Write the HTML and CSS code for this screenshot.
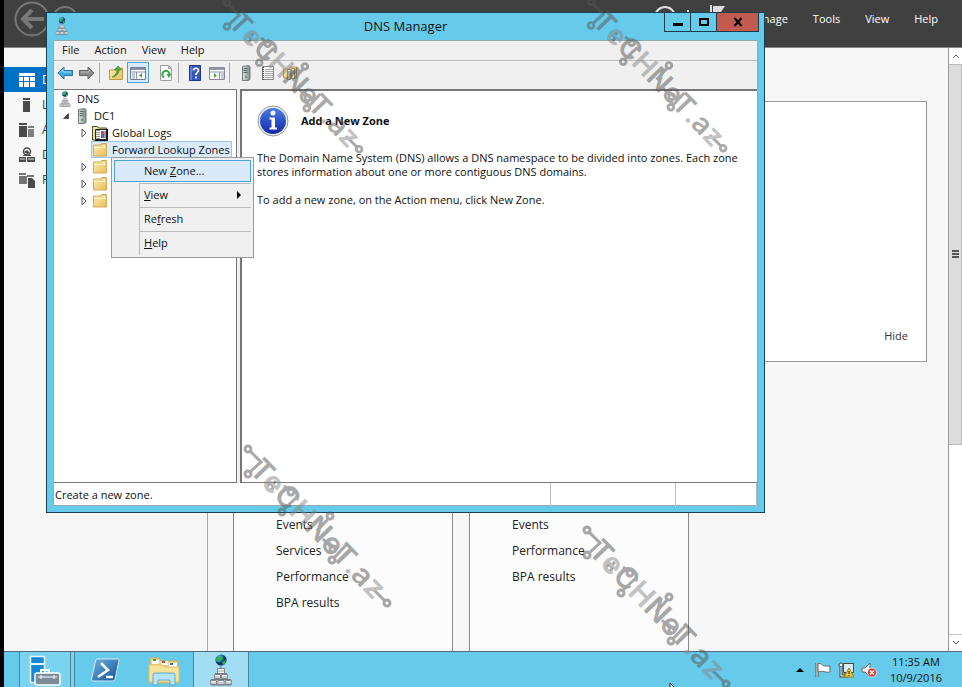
FILE: index.html
```html
<!DOCTYPE html>
<html lang="en">
<head>
<meta charset="utf-8">
<title>DNS Manager</title>
<link rel="stylesheet" href="styles.css">
</head>
<body>
<svg class="sprite" aria-hidden="true">
  <defs>
    <linearGradient id="gold" x1="0" y1="0" x2="1" y2="1"><stop offset="0" stop-color="#fdeeb0"/><stop offset="1" stop-color="#e8bd5c"/></linearGradient>
    <linearGradient id="steel" x1="0" y1="0" x2="1" y2="0"><stop offset="0" stop-color="#e2e6e6"/><stop offset="1" stop-color="#7f8788"/></linearGradient>
    <linearGradient id="blue" x1="0" y1="0" x2="0" y2="1"><stop offset="0" stop-color="#4a7be8"/><stop offset="1" stop-color="#1329a8"/></linearGradient>
    <linearGradient id="ps" x1="0" y1="0" x2="1" y2="1"><stop offset="0" stop-color="#6fb2e2"/><stop offset="1" stop-color="#12508f"/></linearGradient>
    <radialGradient id="globe" cx=".35" cy=".3"><stop offset="0" stop-color="#8ed9ef"/><stop offset=".6" stop-color="#1973ae"/><stop offset="1" stop-color="#0b3467"/></radialGradient>
  </defs>
  <symbol id="dns" viewBox="0 0 24 32">
    <circle cx="12" cy="6" r="5.6" fill="url(#globe)"/>
    <path d="M8 3l5-1 1 3-4 3-3-1zM13 8l4-2-1 4-2 1z" fill="#36ad55"/>
    <path d="M12 11v4" stroke="#777"/>
    <g fill="#f5f5f5" stroke="#85858b"><path d="M8.500 14.500h7v5h-7zM5.500 20.500h6v4h-6zM12.500 20.500h6v4h-6zM1.500 26.500h6v4h-6zM9 26.500h6v4H9zM16.500 26.500h6v4h-6z"/></g>
    <path d="M6 19.500h12M2 25.500h20M2 31h20" stroke="#77777d" fill="none"/>
    <path d="M9 17h6M6 23h5M13 23h5M2 29h5M10 29h4M17 29h5" stroke="#aaa" fill="none"/>
  </symbol>
  <symbol id="folder" viewBox="0 0 16 16">
    <path d="M1.500 3h7l1-1.500h5V14h-13z" fill="url(#gold)" stroke="#d3ab58"/>
    <path d="M10 2.500h3.500V5H10z" fill="#fff5cf" stroke="#d9b566" stroke-width=".6"/>
    <path d="M2 5.500h12" stroke="#fff4c4"/>
  </symbol>
  <symbol id="server" viewBox="0 0 12 16">
    <path d="M2.500 1.500l6-1 1.500 1v13l-2 1h-5.500z" fill="url(#steel)" stroke="#747b7c"/>
    <path d="M3.500 3.500h4M3.500 5.500h4M3.500 7.500h4" stroke="#566"/><path d="M5 11h2v2H5z" fill="#59a866"/>
  </symbol>
  <symbol id="logs" viewBox="0 0 16 16">
    <path d="M.5 3.500V1.500h5l1 1.500h8v12H.5z" fill="#f2e57e" stroke="#444"/>
    <path d="M3.500 4.500h11v10h-11z" fill="#fff" stroke="#222"/><path d="M5 5v9M7 5v9" stroke="#222" stroke-dasharray="1 1"/>
    <path d="M9 6h3v7H9z" fill="#5961b4"/><path d="M10 7h2v2h-2z" fill="#e64c4c"/><path d="M13 6v7" stroke="#333"/><path d="M15.500 4v11.500H3" stroke="#111" fill="none"/>
  </symbol>
  <symbol id="back" viewBox="0 0 16 16"><path d="M1 8l6-6v3.500h8.500v5H7V14z" fill="#42a9df" stroke="#2673a8"/><path d="M3 7.500l3-3V7h8" stroke="#a3e0fa" fill="none"/></symbol>
  <symbol id="forward" viewBox="0 0 16 16"><path d="M15 8L9 2v3.500H.5v5H9V14z" fill="#8c8c8c" stroke="#656565"/><path d="M2 7h8V5" stroke="#bbb" fill="none"/></symbol>
  <symbol id="up" viewBox="0 0 16 16"><path d="M1.500 5h7l1-2h5v11.500h-13z" fill="url(#gold)" stroke="#bf9a4b"/><path d="M4 12c3-1 5-4 5-7H6.500L10 1l3.500 4H11c0 4-3 7-7 7z" fill="#55ad3b" stroke="#347d24" stroke-width=".6"/></symbol>
  <symbol id="tree-pane" viewBox="0 0 16 16"><path d="M.5 2.500h15v12H.5z" fill="#fff" stroke="#747b8e"/><path d="M1 4h14" stroke="#8a91a4" stroke-width="2"/><path d="M1 7h14M6.500 7v7M2 9h3M2 11h3M2 13h3" stroke="#8794af"/><path d="M12 8v5L9 10.500z" fill="#45a345"/></symbol>
  <symbol id="action-pane" viewBox="0 0 16 16"><path d="M.5 2.500h15v12H.5z" fill="#fff" stroke="#858a96"/><path d="M1 4h14" stroke="#9298a6" stroke-width="2"/><path d="M1 7h14M10.500 7v7M12 9h3M12 11h3M12 13h3" stroke="#8794af"/><path d="M5 8v5l3-2.500z" fill="#45a345"/></symbol>
  <symbol id="refresh" viewBox="0 0 16 16"><path d="M2.500.5h8l3 3v12h-11z" fill="#fff" stroke="#9a9a9a"/><path d="M10.500.5v3h3" fill="none" stroke="#aaa"/><path d="M6 12.500A3.600 3.600 0 1 1 11.500 9" fill="none" stroke="#38a545" stroke-width="2"/><path d="M8.500 9h5l-2.500 4z" fill="#38a545"/></symbol>
  <symbol id="help" viewBox="0 0 16 16"><path d="M2.500.5h11v15h-11z" fill="#3457c4" stroke="#203486"/><path d="M4 1v14" stroke="#8aa4ee"/><path d="M6.500 5.500c0-3 5-3 5 0 0 2-2.500 2-2.500 4.500M9 11.500v2" stroke="#fff" stroke-width="1.700" fill="none"/></symbol>
  <symbol id="list" viewBox="0 0 16 16"><path d="M2.500 1.500h11v13h-11z" fill="#f8f8f8" stroke="#888"/><path d="M5 4.500h8M5 6.500h8M5 8.500h8M5 10.500h8M5 12.500h8" stroke="#aaa"/><path d="M3 2v13" stroke="#555" stroke-width="2" stroke-dasharray="1 1"/></symbol>
  <symbol id="stack" viewBox="0 0 16 16"><path d="M1.500 4h6l1-2h6v11h-13z" fill="url(#gold)" stroke="#ba9342"/><path d="M5.500 4.500h3v10h-3zM9.500 3.500h3v10h-3z" fill="#f5edcb" stroke="#8e896f"/><path d="M6 7h2M6 9h2M10 6h2M10 8h2" stroke="#426caa"/></symbol>
  <symbol id="nodes" viewBox="0 0 150 164">
    <g fill="none" stroke="currentColor" stroke-width="3">
      <circle cx="5" cy="5" r="3"/><circle cx="5" cy="30" r="3"/><path d="M7 7l11 11L7 28"/>
      <circle cx="27" cy="43" r="3"/><path d="M29 41l4-4"/>
      <circle cx="48" cy="48" r="3"/><path d="M46 46l-5-4"/>
      <circle cx="39" cy="68" r="3"/><path d="M41 65l13-12"/>
      <circle cx="87" cy="72" r="3"/><path d="M85 75L74 87"/>
      <circle cx="90" cy="105" r="3"/><path d="M88 103l-8-8"/>
      <circle cx="89" cy="116" r="3"/><path d="M91 114l12-13"/>
      <circle cx="144" cy="159" r="3"/><path d="M142 157l-12-12"/>
    </g>
  </symbol>
</svg>

<div class="desktop">
  <div class="manager">
    <header class="topbar">
      <svg class="nav-arrows" viewBox="0 0 76 48" aria-hidden="true"><g fill="none" stroke="#777"><circle cx="28" cy="19" r="16.500" stroke-width="2"/><path d="M40 19H20M28 10l-9 9 9 9" stroke-width="4"/><circle cx="61" cy="19" r="12" stroke-width="2"/></g></svg>
      <svg class="flag-icons" viewBox="0 0 90 20" aria-hidden="true"><g fill="none" stroke="#ddd" stroke-width="2"><circle cx="15" cy="17" r="10"/><path d="M38 10v6M61 5v15"/></g><path d="M63 6h12l-4 6h-8z" fill="#ddd"/></svg>
      <nav class="top-links"><a href="#">Manage</a><a href="#">Tools</a><a href="#">View</a><a href="#">Help</a></nav>
    </header>
    <div class="manager-body">
      <nav class="sidebar">
        <a class="side-link current" href="#"><svg viewBox="0 0 16 16"><path d="M0 1h16v3H0zM0 5h4v4H0zM5 5h5v4H5zM11 5h5v4h-5zM0 10h4v5H0zM5 10h5v5H5zM11 10h5v5h-5z" fill="#fff"/></svg>D</a>
        <a class="side-link" href="#"><svg viewBox="0 0 16 16"><path d="M4 1h7v2H4zM4 4h7v11H4z"/></svg>L</a>
        <a class="side-link" href="#"><svg viewBox="0 0 16 16"><path d="M0 1h8v2H0zM0 4h8v11H0z"/><path d="M9 4h6v2H9zM9 7h6v8H9z" opacity=".7"/></svg>A</a>
        <a class="side-link" href="#"><svg viewBox="0 0 16 16"><circle cx="8" cy="4.500" r="3.500" fill="none" stroke="#4a4a4a" stroke-width="1.500"/><path d="M5 5l3-2 3 3-3 1zM0 10h7v5H0zM8 10h8v5H8zM4 8h8v1H4z"/><path d="M1 12h5M9 12h6" stroke="#ddd"/></svg>D</a>
        <a class="side-link" href="#"><svg viewBox="0 0 16 16"><path d="M0 1h7v2H0zM0 4h8v8H0zM8 3h7v2H8z" opacity=".75"/><path d="M9 6h4l3 3v7H9z"/></svg>F</a>
      </nav>
      <main class="dashboard">
        <section class="welcome"><button class="hide">Hide</button></section>
        <div class="tiles">
          <ul class="tile"><li>Events</li><li>Services</li><li>Performance</li><li>BPA results</li></ul>
          <ul class="tile"><li>Events</li><li>Performance</li><li>BPA results</li></ul>
        </div>
      </main>
      <div class="scroller">
        <button class="scroll-end" aria-label="Scroll up"><svg viewBox="0 0 12 12"><path d="M3 8l3-3 3 3"/></svg></button>
        <div class="thumb"><i></i><i></i><i></i></div>
        <div class="track"></div>
        <button class="scroll-end" aria-label="Scroll down"><svg viewBox="0 0 12 12"><path d="M3 4l3 3 3-3"/></svg></button>
      </div>
    </div>
  </div>

  <footer class="taskbar">
    <button class="task open" aria-label="Server Manager"><svg viewBox="0 0 32 32"><path d="M1.500 2.500h14v26h-14z" fill="#1688d6" stroke="#e8f6ff" stroke-width="1.500"/><path d="M2 10h13" stroke="#e8f6ff" stroke-width="2"/><path d="M12 19v-3h8v3" fill="none" stroke="#fff" stroke-width="2"/><rect x="6" y="19" width="25" height="12" rx="2" fill="#7c8b99" stroke="#fff" stroke-width="1.500"/><path d="M9 23h19M12 21v4M25 21v4" stroke="#fff"/></svg></button>
    <span class="stack-edge"></span>
    <button class="task" aria-label="PowerShell"><svg viewBox="0 0 32 32"><path d="M8 5h20.500q2 0 1.500 2l-4 18q-.5 2-2.500 2H4q-2 0-1.500-2l4-18Q7 5 8 5z" fill="url(#ps)" stroke="#d5eaf5"/><path d="M12 9l7 7-10 7M17 23h7" fill="none" stroke="#fff" stroke-width="2.500"/></svg></button>
    <button class="task" aria-label="File Explorer"><svg viewBox="0 0 32 32"><path d="M2 4h9l2 3h17v22H2z" fill="#edd27e" stroke="#cdae5c"/><path d="M4 6h7v4H4zM13 7h7v4h-7zM21 9h8v4h-8z" fill="#fff"/><path d="M5 5h3v2H5z" fill="#35a244"/><path d="M14 7h3v2h-3z" fill="#d14333"/><path d="M22 9h3v2h-3z" fill="#356fc7"/><path d="M1 11h14l2 2h14v15H1z" fill="#f6e398" stroke="#dcc06c"/><path d="M5 31V21q0-2 2-2h18q2 0 2 2v10h-5v-5H10v5z" fill="#b5e4f7" stroke="#5ba9cd"/></svg></button>
    <button class="task active" aria-label="DNS Manager"><svg viewBox="0 0 24 32"><use href="#dns"/></svg></button>
    <div class="tray">
      <svg class="up-tri" viewBox="0 0 8 8"><path d="M0 6l4-4 4 4z"/></svg>
      <svg viewBox="0 0 16 16"><path d="M2 1v14" stroke="#555" stroke-width="3"/><path d="M2 1v14" stroke="#fff"/><path d="M3 2c3-2 4 2 7 2h5v6c-5 1-7-2-12 0z" fill="#fff" stroke="#666"/></svg>
      <svg viewBox="0 0 16 16"><path d="M5.500 1.500h10v9h-10z" fill="#dcecf3" stroke="#444"/><circle cx="3" cy="3" r="2" fill="#fff" stroke="#444"/><path d="M3 5v9h7M8 11v3" fill="none" stroke="#444" stroke-width="3"/><path d="M3 5v9h7M8 11v3" fill="none" stroke="#fff"/><path d="M11 6l5 9H6z" fill="#f5ca22" stroke="#9d791a"/><path d="M11 9v3M11 13v1" stroke="#222"/></svg>
      <svg viewBox="0 0 16 16"><path d="M1 6h3l5-5v14l-5-5H1z" fill="#f6f6f6" stroke="#666"/><circle cx="11" cy="10.500" r="4.500" fill="#d9342c" stroke="#fff" stroke-width=".7"/><path d="M9 8.500l4 4M13 8.500l-4 4" stroke="#fff" stroke-width="1.500"/></svg>
      <time class="clock">11:35 AM<br>10/9/2016</time>
    </div>
  </footer>

  <section class="window">
    <header class="titlebar">
      <svg class="title-icon" viewBox="0 0 24 32"><use href="#dns"/></svg>
      <h1>DNS Manager</h1>
      <div class="controls">
        <button aria-label="Minimize"><svg viewBox="0 0 12 12"><path d="M1 7h10v3H1z"/></svg></button><button aria-label="Maximize"><svg viewBox="0 0 12 12"><path d="M2 3h8v6H2z" fill="none" stroke="#000" stroke-width="2"/></svg></button><button class="close" aria-label="Close"><svg viewBox="0 0 12 12"><path d="M2.500 2l7 8M9.500 2l-7 8" stroke="#000" stroke-width="2"/></svg></button>
      </div>
    </header>
    <div class="client">
      <nav class="menubar"><button>File</button><button>Action</button><button>View</button><button>Help</button></nav>
      <div class="toolbar">
        <button aria-label="Back"><svg><use href="#back"/></svg></button><button aria-label="Forward"><svg><use href="#forward"/></svg></button><span class="sep"></span>
        <button aria-label="Up one level"><svg><use href="#up"/></svg></button><button class="pressed" aria-label="Console tree"><svg><use href="#tree-pane"/></svg></button><span class="gap"></span>
        <button aria-label="Refresh"><svg><use href="#refresh"/></svg></button><span class="sep"></span>
        <button aria-label="Help"><svg><use href="#help"/></svg></button><button aria-label="Action pane"><svg><use href="#action-pane"/></svg></button><span class="sep"></span>
        <button aria-label="Server"><svg><use href="#server"/></svg></button><button aria-label="Filter"><svg><use href="#list"/></svg></button><button aria-label="New zone"><svg><use href="#stack"/></svg></button>
      </div>
      <div class="panes">
        <ul class="tree">
          <li class="level-0"><svg><use href="#dns"/></svg><span>DNS</span></li>
          <li class="level-1"><svg class="twisty" viewBox="0 0 8 8"><path d="M6.500 1.500v5h-5z"/></svg><svg><use href="#server"/></svg><span>DC1</span></li>
          <li class="level-2"><svg class="twisty" viewBox="0 0 8 8"><path d="M2 0l4 4-4 4z"/></svg><svg><use href="#logs"/></svg><span>Global Logs</span></li>
          <li class="level-2 selected"><b><svg><use href="#folder"/></svg><span>Forward Lookup Zones</span></b></li>
          <li class="level-2"><svg class="twisty" viewBox="0 0 8 8"><path d="M2 0l4 4-4 4z"/></svg><svg><use href="#folder"/></svg></li>
          <li class="level-2"><svg class="twisty" viewBox="0 0 8 8"><path d="M2 0l4 4-4 4z"/></svg><svg><use href="#folder"/></svg></li>
          <li class="level-2"><svg class="twisty" viewBox="0 0 8 8"><path d="M2 0l4 4-4 4z"/></svg><svg><use href="#folder"/></svg></li>
        </ul>
        <article class="detail">
          <div class="detail-head"><svg viewBox="0 0 32 32"><circle cx="16" cy="16" r="15" fill="#eee" stroke="#999"/><circle cx="16" cy="16" r="13" fill="url(#blue)"/><circle cx="16" cy="8" r="2.500" fill="#fff"/><path d="M12.500 12.500h5.500v10h2v2h-7.500v-2h2v-8h-2z" fill="#fff"/></svg><h2>Add a New Zone</h2></div>
          <p>The Domain Name System (DNS) allows a DNS namespace to be divided into zones. Each zone stores information about one or more contiguous DNS domains.</p>
          <p>To add a new zone, on the Action menu, click New Zone.</p>
        </article>
      </div>
      <div class="statusbar"><span>Create a new zone.</span><span></span><span></span></div>
    </div>
  </section>

  <div class="context-menu" role="menu">
    <button class="hot" role="menuitem">New <u>Z</u>one...</button>
    <button role="menuitem"><u>V</u>iew<svg viewBox="0 0 8 8"><path d="M2 0l4 4-4 4z"/></svg></button>
    <button role="menuitem">Re<u>f</u>resh</button>
    <button role="menuitem"><u>H</u>elp</button>
  </div>

  <svg class="mark mark-a small" viewBox="0 0 150 164"><use href="#nodes"/><text class="mark-text" transform="translate(5 27) rotate(46)">T<tspan class="faint">e</tspan>C<tspan class="faint">H</tspan>NeT<tspan class="faint">.</tspan>a<tspan class="faint">z</tspan></text></svg>
  <svg class="mark mark-b small" viewBox="0 0 150 164"><use href="#nodes"/><text class="mark-text" transform="translate(5 27) rotate(46)">T<tspan class="faint">e</tspan>C<tspan class="faint">H</tspan>NeT<tspan class="faint">.</tspan>a<tspan class="faint">z</tspan></text></svg>
  <svg class="mark mark-c" viewBox="0 0 150 164"><use href="#nodes"/><text class="mark-text" transform="translate(5 27) rotate(46)">T<tspan class="faint">e</tspan>C<tspan class="faint">H</tspan>NeT<tspan class="faint">.</tspan>a<tspan class="faint">z</tspan></text></svg>
  <svg class="mark mark-d" viewBox="0 0 150 164"><use href="#nodes"/><text class="mark-text" transform="translate(5 27) rotate(46)">T<tspan class="faint">e</tspan>C<tspan class="faint">H</tspan>NeT<tspan class="faint">.</tspan>a<tspan class="faint">z</tspan></text></svg>
  <svg class="pointer" viewBox="0 0 12 18"><path d="M1 1v14l3-3 3 5 2-1-2-5h4z" fill="#fff" stroke="#111"/></svg>
</div>
</body>
</html>
```
FILE: styles.css
```css
* { box-sizing: border-box; }
body { margin: 0; background: #000; color: #111; font: 12px/16px "Open Sans", "Noto Sans", sans-serif; }
button { padding: 0; border: 0; background: none; font: inherit; color: inherit; }
a { color: inherit; text-decoration: none; }
ul { margin: 0; padding: 0; list-style: none; }
h1, h2, p { margin: 0; font: inherit; }
.sprite { position: absolute; width: 0; height: 0; }

.desktop { position: relative; display: flex; flex-direction: column; height: 100vh; padding-left: 4px; overflow: hidden; }
.manager { flex: 1; min-height: 0; display: flex; flex-direction: column; background: #f7f7f7; }

.topbar { position: relative; display: flex; justify-content: flex-end; height: 48px; background: #404040; border-bottom: 1px solid #888; color: #fff; }
.nav-arrows { position: absolute; left: 0; top: 0; width: 76px; height: 48px; }
.flag-icons { position: absolute; right: 222px; top: 0; width: 90px; height: 20px; }
.top-links { display: flex; gap: 25px; padding: 11px 24px 0 0; font-size: 11px; }

.manager-body { flex: 1; min-height: 0; display: flex; }
.sidebar { width: 204px; padding-top: 19px; border-right: 1px solid #aaa; color: #444; }
.side-link { display: flex; align-items: center; gap: 7px; height: 25px; padding-left: 15px; font-size: 12px; }
.side-link svg { width: 16px; height: 16px; fill: #4a4a4a; }
.side-link.current { background: #0072c6; color: #fff; }

.dashboard { flex: 1; display: flex; flex-direction: column; padding: 53px 21px 0 25px; }
.welcome { display: flex; justify-content: flex-end; align-items: flex-end; height: 261px; padding: 0 18px 17px; background: #fff; border: 1px solid #999; }
.hide { color: #333; font-size: 11px; }
.tiles { flex: 1; display: flex; gap: 16px; padding-top: 40px; }
.tile { width: 220px; padding: 109px 42px 0; background: #fcfcfc; border: 1px solid #888; border-bottom: 0; line-height: 26px; color: #222; }

.scroller { width: 14px; display: flex; flex-direction: column; background: #fff; border-left: 1px solid #999; }
.scroll-end { height: 16px; line-height: 0; background: #fff; }
.scroll-end svg { width: 12px; height: 12px; fill: none; stroke: #555; stroke-width: 1; }
.thumb { flex: 2; display: flex; flex-direction: column; align-items: center; justify-content: center; gap: 1px; background: #dcdcdc; border: 1px solid #bbb; border-left: 0; }
.thumb i { width: 7px; height: 2px; background: #555; }
.track { flex: 1; border-bottom: 1px solid #ccc; }

.taskbar { display: flex; height: 36px; padding-left: 15px; background: #66caea; border-top: 1px solid #567; }
.task { width: 59px; height: 36px; line-height: 0; }
.task svg { width: 32px; height: 32px; }
.task.open { width: 52px; background: #7ad3ef; border: solid #47849d; border-width: 0 1px; }
.task.active { width: 56px; background: #a2def3; border: solid #47849d; border-width: 0 1px; }
.stack-edge { width: 4px; background: #7ad3ef; border-right: 1px solid #47849d; }
.tray { display: flex; align-items: center; gap: 7px; margin-left: auto; padding-right: 20px; }
.tray svg { width: 16px; height: 16px; }
.tray .up-tri { width: 8px; height: 8px; margin-right: 4px; }
.clock { margin-left: 6px; text-align: center; font-size: 11px; }

.window { position: absolute; left: 46px; right: 197px; top: 12px; bottom: 174px; display: flex; flex-direction: column; padding: 0 6px 6px; background: #66caea; border: 1px solid #19414f; }
.titlebar { position: relative; height: 27px; text-align: center; }
.titlebar h1 { font-size: 13px; line-height: 27px; }
.title-icon { position: absolute; left: 1px; top: 4px; width: 16px; height: 18px; }
.controls { position: absolute; right: -1px; top: -1px; display: flex; height: 20px; }
.controls button { width: 27px; margin-left: -1px; border: 1px solid #183c49; line-height: 0; }
.controls .close { width: 43px; background: #c25a50; }
.controls svg { width: 12px; height: 12px; }

.client { flex: 1; min-height: 0; display: flex; flex-direction: column; background: #f0f0f0; border: 1px solid #9aa; font-size: 11px; }
.menubar { display: flex; gap: 15px; height: 20px; padding: 0 8px 2px; border-bottom: 1px solid #bbb; }
.toolbar { display: flex; align-items: center; height: 28px; padding-bottom: 5px; }
.toolbar button { width: 22px; height: 21px; line-height: 0; }
.toolbar button svg { width: 16px; height: 16px; }
.toolbar .pressed { background: #d5eafb; border: 1px solid #4aa3dc; }
.sep { width: 1px; height: 20px; margin: 0 5px 0 1px; background: #aaa; }
.gap { width: 6px; }

.panes { flex: 1; min-height: 0; display: flex; gap: 3px; }
.tree { width: 183px; background: #fff; border: 1px solid #777; border-left: 0; }
.tree li { display: flex; align-items: center; gap: 4px; height: 17px; }
.tree svg { width: 16px; height: 16px; }
.tree .twisty { width: 8px; height: 8px; fill: #fff; stroke: #555; }
.level-0 { padding-left: 3px; }
.level-1 { padding-left: 8px; }
.level-1 .twisty path { fill: #444; }
.level-2 { padding-left: 26px; }
.tree .selected { padding-left: 37px; }
.selected b { display: flex; align-items: center; gap: 4px; height: 17px; padding-right: 1px; font-weight: 400; background: #d9eafb; border: 1px solid #9ac4e8; white-space: nowrap; }
.detail { flex: 1; padding: 14px 15px 0; background: #fff; border: solid #777; border-width: 2px 0 1px 2px; line-height: 14px; }
.detail p { margin-bottom: 14px; }
.detail-head { display: flex; align-items: center; gap: 12px; margin-bottom: 14px; }
.detail-head svg { width: 32px; height: 32px; }
.detail-head h2 { font-weight: 700; }
.statusbar { display: grid; grid-template-columns: 1fr 125px 81px; height: 22px; background: #fff; line-height: 24px; }
.statusbar span { padding-left: 1px; border-right: 1px solid #bbb; }

.context-menu { position: absolute; left: 111px; top: 157px; width: 143px; padding: 2px; background: #f0f0f0; border: 1px solid #999; font-size: 11px; }
.context-menu button { position: relative; display: block; width: 100%; height: 24px; padding-left: 30px; text-align: left; background: linear-gradient(90deg, transparent 25px, #bbb 25px, #bbb 26px, transparent 26px); }
.context-menu button + button::before { content: ""; position: absolute; left: 26px; right: 0; top: 0; border-top: 1px solid #bbb; }
.context-menu .hot { height: 22px; margin-bottom: 1px; padding-left: 29px; background: #d9eafb; border: 1px solid #4aa3dc; }
.context-menu svg { position: absolute; right: 8px; top: 8px; width: 8px; height: 8px; }

.mark { position: absolute; width: 150px; height: 164px; color: #555; opacity: .5; overflow: visible; pointer-events: none; }
.mark.small { width: 143px; height: 156px; }
.mark-text { font: 600 30px Inter, sans-serif; fill: currentColor; }
.faint { fill: #888; }
.mark-a { left: 222px; top: -2px; }
.mark-b { left: 586px; top: -3px; }
.mark-c { left: 243px; top: 444px; }
.mark-d { left: 582px; top: 525px; }
.pointer { position: absolute; left: 669px; top: 682px; width: 12px; height: 18px; }
```
